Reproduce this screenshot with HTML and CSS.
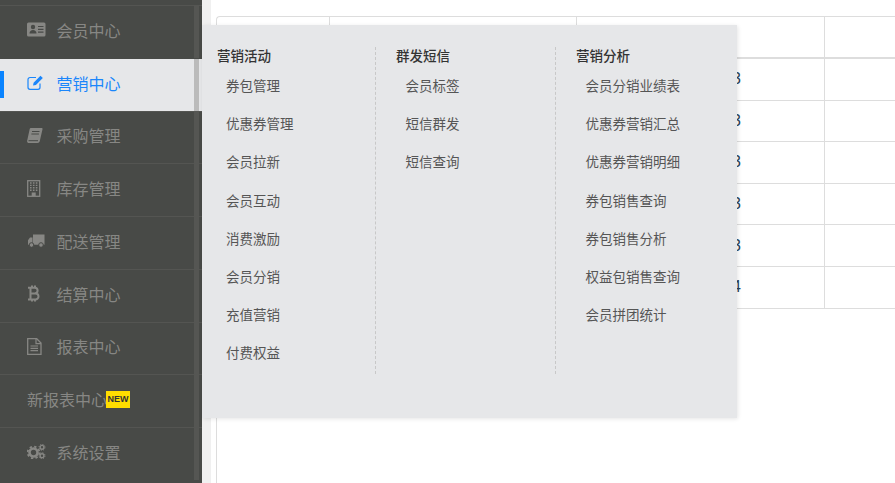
FILE: index.html
```html
<!DOCTYPE html>
<html lang="zh-CN">
<head>
<meta charset="utf-8">
<title>营销中心</title>
<link rel="stylesheet" href="styles.css">
</head>
<body>
<div class="app">
  <aside class="sidebar">
    <a class="nav-item">
      <svg class="icon" viewBox="0 0 19 15"><rect x="0" y="0.5" width="18.5" height="14" rx="1.5" fill="currentColor"/><circle cx="6" cy="5" r="2.2" fill="#484a47"/><path d="M2.5 11.5c0-2.4 1.5-3.6 3.5-3.6s3.500 1.200 3.500 3.600z" fill="#484a47"/><path d="M11 4.500h5.500M11 7.300h5.500M11 10.100h5.500" stroke="#484a47" stroke-width="1.200"/></svg>
      <span>会员中心</span>
    </a>
    <a class="nav-item active">
      <svg class="icon" viewBox="0 0 19 15"><path d="M9 2.500H3A2 2 0 0 0 1 4.500v7.800a2 2 0 0 0 2 2h8a2 2 0 0 0 2-2V8.500" fill="none" stroke="currentColor" stroke-width="1.200"/><path d="M6 10.500l.6-2.800L13.500 .8l2.300 2.300-6.900 6.900z" fill="currentColor"/></svg>
      <span>营销中心</span>
    </a>
    <a class="nav-item">
      <svg class="icon" viewBox="0 0 19 15"><path d="M3.800 0h10.700c.9 0 1.200.6 1 1.300L12.800 13c-.3 1.200-1 2-2.300 2H2c-1.400 0-2.200-1-1.800-2.500L2.700 1C2.900.4 3.200 0 3.800 0z" fill="currentColor"/><path d="M5 3.500h7.500M4.400 6h7.500M1.500 12.700h9.500" stroke="#484a47" stroke-width="1"/></svg>
      <span>采购管理</span>
    </a>
    <a class="nav-item">
      <svg class="icon tall" viewBox="0 0 19 17"><rect x="0.700" y="0.700" width="12" height="15.600" fill="none" stroke="currentColor" stroke-width="1.300"/><path d="M3 3h1.600M5.900 3h1.600M8.800 3h1.600M3 5.400h1.600M5.900 5.400h1.600M8.800 5.400h1.600M3 7.800h1.600M5.900 7.800h1.600M8.800 7.800h1.600M3 10.200h1.600M5.900 10.200h1.600M8.800 10.200h1.600" stroke="currentColor" stroke-width="1.400"/><rect x="4.700" y="12.500" width="4" height="3.500" fill="currentColor"/></svg>
      <span>库存管理</span>
    </a>
    <a class="nav-item">
      <svg class="icon" viewBox="0 0 19 15"><path d="M6 1.500h11.500v10.300H6zM5.500 4.500H3L1 7.300v4.500h4.500z" fill="currentColor"/><circle cx="4.500" cy="12" r="2.300" fill="currentColor" stroke="#484a47"/><circle cx="14" cy="12" r="2.300" fill="currentColor" stroke="#484a47"/></svg>
      <span>配送管理</span>
    </a>
    <a class="nav-item">
      <svg class="icon tall" viewBox="0 0 19 17"><path d="M3.500 2.500v12M3.500 2.800h4.300a2.800 2.800 0 0 1 0 5.600H3.500M3.500 8.400h5a3 3 0 0 1 0 6h-5M1 2.800h3M1 14.400h3M5 .5v2M8 .5v2M5 14.500v2M8 14.500v2" fill="none" stroke="currentColor" stroke-width="2"/></svg>
      <span>结算中心</span>
    </a>
    <a class="nav-item">
      <svg class="icon tall" viewBox="0 0 19 17"><path d="M.700.700h9l4.300 4.300v11.300H.700z" fill="none" stroke="currentColor" stroke-width="1.300"/><path d="M9 .700v5h5M3.500 8h7.500M3.500 10.300h7.500M3.500 12.700h7.500" fill="none" stroke="currentColor" stroke-width="1.200"/></svg>
      <span>报表中心</span>
    </a>
    <a class="nav-item plain">
      <span>新报表中心</span><em class="badge">NEW</em>
    </a>
    <a class="nav-item">
      <svg class="icon" viewBox="0 0 19 15"><circle cx="6.500" cy="8.500" r="4" fill="none" stroke="currentColor" stroke-width="2.600"/><circle cx="6.500" cy="8.500" r="5.900" fill="none" stroke="currentColor" stroke-width="1.800" stroke-dasharray="2.300 2.330"/><circle cx="15" cy="3.300" r="1.900" fill="none" stroke="currentColor" stroke-width="1.400"/><circle cx="15" cy="3.300" r="3" fill="none" stroke="currentColor" stroke-width="1" stroke-dasharray="1.200 1.160"/><circle cx="15" cy="11.700" r="1.900" fill="none" stroke="currentColor" stroke-width="1.400"/><circle cx="15" cy="11.700" r="3" fill="none" stroke="currentColor" stroke-width="1" stroke-dasharray="1.200 1.160"/></svg>
      <span>系统设置</span>
    </a>
  </aside>

  <main class="content">
    <div class="table-wrap">
      <table class="data">
        <colgroup><col class="c1"><col class="c2"><col class="c3"><col class="c4"></colgroup>
        <thead><tr><th></th><th></th><th></th><th></th></tr></thead>
        <tbody>
          <tr><td></td><td></td><td class="num">3</td><td></td></tr>
          <tr><td></td><td></td><td class="num">3</td><td></td></tr>
          <tr><td></td><td></td><td class="num">3</td><td></td></tr>
          <tr><td></td><td></td><td class="num">3</td><td></td></tr>
          <tr><td></td><td></td><td class="num">3</td><td></td></tr>
          <tr><td></td><td></td><td class="num">4</td><td></td></tr>
        </tbody>
      </table>
    </div>
  </main>

  <section class="flyout">
    <div class="col first">
      <h3>营销活动</h3>
      <ul>
        <li>券包管理</li><li>优惠券管理</li><li>会员拉新</li><li>会员互动</li>
        <li>消费激励</li><li>会员分销</li><li>充值营销</li><li>付费权益</li>
      </ul>
    </div>
    <div class="col second">
      <h3>群发短信</h3>
      <ul>
        <li>会员标签</li><li>短信群发</li><li>短信查询</li>
      </ul>
    </div>
    <div class="col third">
      <h3>营销分析</h3>
      <ul>
        <li>会员分销业绩表</li><li>优惠券营销汇总</li><li>优惠券营销明细</li><li>券包销售查询</li>
        <li>券包销售分析</li><li>权益包销售查询</li><li>会员拼团统计</li>
      </ul>
    </div>
  </section>
</div>
</body>
</html>
```

FILE: styles.css
```css
* { box-sizing: border-box; }
html, body { margin: 0; height: 100%; overflow: hidden; background: #fff; }
body { font-family: "Noto Sans CJK SC", "Liberation Sans", sans-serif; }

.app { position: relative; display: flex; width: 895px; height: 483px; overflow: hidden; }

.sidebar {
  flex: 0 0 202px;
  height: 483px;
  padding-top: 5px;
  background: #484a47;
  overflow: hidden;
}
.nav-item {
  position: relative;
  display: flex;
  align-items: center;
  height: 52.75px;
  padding: 0 0 4px 27px;
  border-top: 1px solid #545552;
  color: #878784;
  font-size: 16px;
  line-height: 20px;
}
.nav-item::after {
  content: "";
  position: absolute;
  left: 194px;
  top: -1px;
  bottom: 0;
  width: 5px;
  background: #555653;
}
.nav-item.active {
  background: #e6e7e9;
  border-top-color: #484a47;
  color: #1a86fb;
}
.nav-item.active::after { top: 0; background: #bbb; }
.nav-item.active::before {
  content: "";
  position: absolute;
  left: 0;
  top: 12px;
  width: 4px;
  height: 27px;
  background: #0a84ff;
}
.icon { flex: 0 0 19px; width: 19px; height: 15px; margin-right: 10.5px; }
.icon.tall { height: 17px; }
.badge {
  width: 24px;
  height: 17px;
  margin-top: 1px;
  margin-left: -1px;
  background: #ffdd00;
  color: #333;
  font: bold 9px/17px "Liberation Sans", sans-serif;
  text-align: center;
}

.content { flex: 1; min-width: 0; height: 483px; padding-left: 9px; overflow: hidden; background: #fff; }
.table-wrap {
  position: relative;
  height: 483px;
  padding: 16px 0 0 5px;
  background: #fff;
  box-shadow: -9px 0 0 #f0f0f0;
  overflow: hidden;
}
.table-wrap::before {
  content: "";
  position: absolute;
  left: 5px;
  top: 20px;
  bottom: 0;
  width: 1px;
  background: #ddd;
}
.data {
  width: 800px;
  table-layout: fixed;
  border-collapse: separate;
  border-spacing: 0;
  border-top: 1px solid #ddd;
  border-top-left-radius: 4px;
  border-left: 1px solid #ddd;
  font: 16px/20px "Liberation Sans", sans-serif;
  color: #2a3f55;
}
.c1 { width: 113px; }
.c2 { width: 247px; }
.c3 { width: 248px; }
.c4 { width: 192px; }
.data th, .data td { padding: 0; border-right: 1px solid #ddd; }
.data th { height: 42px; border-bottom: 2px solid #ddd; }
.data td { height: 41.6px; border-bottom: 1px solid #ddd; }
.data .num { padding-right: 83px; text-align: right; }

.flyout {
  position: absolute;
  left: 202px;
  top: 25px;
  display: flex;
  align-items: flex-start;
  width: 535px;
  height: 393px;
  padding-top: 22px;
  background: #e6e7e9;
  box-shadow: 1px 1px 4px rgba(0, 0, 0, .1);
}
.col { height: 327px; padding-left: 20px; border-right: 1px dashed #c8c8c8; }
.col.first { flex: 0 0 174px; padding-left: 15px; }
.col.second { flex: 0 0 180px; }
.col.third { flex: 1; border-right: 0; }
.col h3 { margin: -2px 0 1px; height: 20px; color: #333; font-size: 13.5px; line-height: 20px; font-weight: 500; }
.col ul { margin: 0; padding: 0 0 0 9.5px; list-style: none; }
.col.first ul { padding-left: 9px; }
.col li { height: 38.2px; color: #555; font-size: 13.5px; line-height: 38.2px; white-space: nowrap; }
```
